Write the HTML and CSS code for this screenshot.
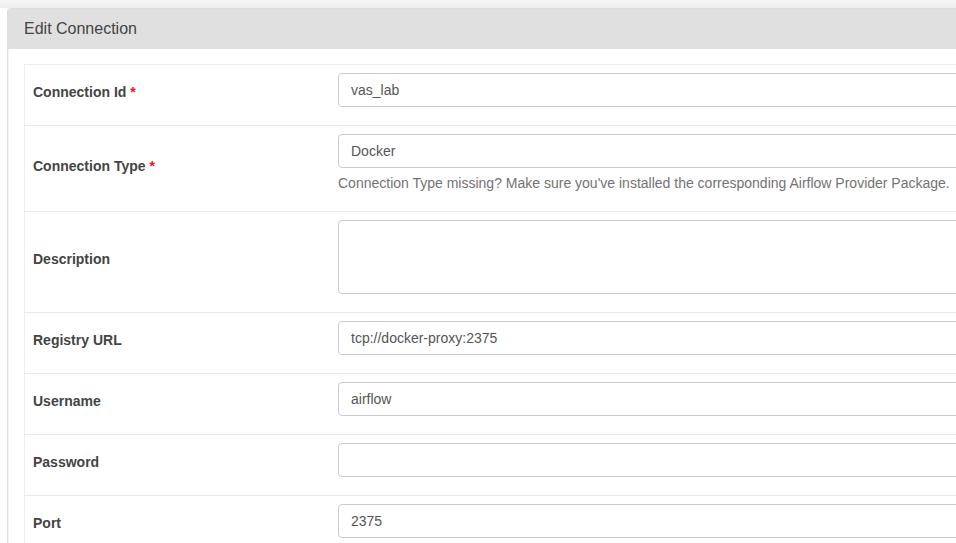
FILE: index.html
```html
<!DOCTYPE html>
<html>
<head>
<meta charset="utf-8">
<link rel="stylesheet" href="styles.css">
</head>
<body>
<div class="topbar"></div>
<div class="panel">
  <div class="panel-heading">Edit Connection</div>
  <div class="panel-body">
    <table class="form-table">
      <tr>
        <td class="label-cell">Connection Id <span class="req">*</span></td>
        <td class="field-cell"><div class="input">vas_lab</div></td>
      </tr>
      <tr>
        <td class="label-cell">Connection Type <span class="req">*</span></td>
        <td class="field-cell"><div class="input">Docker</div>
          <div class="help">Connection Type missing? Make sure you've installed the corresponding Airflow Provider Package.</div></td>
      </tr>
      <tr>
        <td class="label-cell">Description</td>
        <td class="field-cell"><div class="input textarea"></div></td>
      </tr>
      <tr>
        <td class="label-cell">Registry URL</td>
        <td class="field-cell"><div class="input">tcp://docker-proxy:2375</div></td>
      </tr>
      <tr>
        <td class="label-cell">Username</td>
        <td class="field-cell"><div class="input">airflow</div></td>
      </tr>
      <tr>
        <td class="label-cell">Password</td>
        <td class="field-cell"><div class="input"></div></td>
      </tr>
      <tr>
        <td class="label-cell">Port</td>
        <td class="field-cell"><div class="input">2375</div></td>
      </tr>
    </table>
  </div>
</div>
</body>
</html>
```
FILE: styles.css
```css
html, body {
  margin: 0;
  padding: 0;
  overflow: hidden;
  background: #fff;
  font-family: "Liberation Sans", Arial, sans-serif;
  font-size: 14px;
  line-height: 20px;
  color: #333;
}
.topbar {
  height: 8px;
  background: linear-gradient(#f7f7f7, #ececec);
}
.panel {
  margin-left: 7px;
  width: 1400px;
  border: 1px solid #ddd;
  border-bottom: none;
  border-radius: 4px 4px 0 0;
  box-shadow: inset 1px 0 0 #f2f2f2;
}
.panel-heading {
  height: 40px;
  box-sizing: border-box;
  padding: 9px 16px 0;
  background: #e0e0e0;
  font-size: 16px;
  line-height: 21px;
  color: #444;
  border-radius: 3px 3px 0 0;
}
.panel-body {
  padding: 15px 0 0 16px;
}
.form-table {
  border-collapse: collapse;
  width: 1360px;
  border-top: 1px solid #eee;
  border-left: 1px solid #eee;
}
.form-table td {
  border-bottom: 1px solid #e9e9e9;
  padding: 8px;
}
.form-table td.label-cell {
  width: 289px;
  vertical-align: middle;
  font-weight: bold;
  color: #444;
  padding-top: 5px;
  padding-bottom: 11px;
}
.req {
  color: #e02020;
}
.field-cell {
  vertical-align: top;
}
.input {
  height: 34px;
  box-sizing: border-box;
  border: 1px solid #ccc;
  border-radius: 4px;
  padding: 6px 12px;
  color: #555;
  margin-bottom: 10px;
  background: #fff;
}
.textarea {
  height: 74px;
}
.help {
  margin-top: -5px;
  margin-bottom: 10px;
  color: #737373;
}
```
